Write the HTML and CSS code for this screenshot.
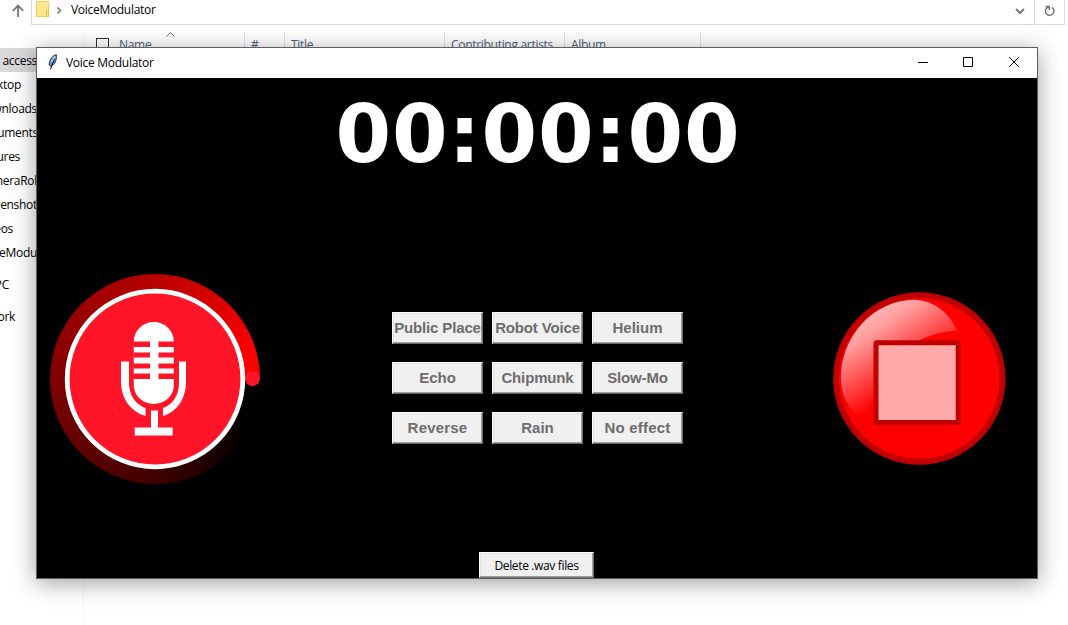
FILE: index.html
```html
<!DOCTYPE html>
<html lang="en">
<head>
<meta charset="utf-8">
<title>Voice Modulator</title>
<link rel="stylesheet" href="styles.css">
</head>
<body>
<div class="explorer">
  <header class="toolbar">
    <svg class="up" width="31" height="24" viewBox="0 0 31 24" fill="none" stroke="#757575" stroke-width="1.8"><path d="M18 17V5.500M12.800 10.800L18 5.600L23.200 10.800"/></svg>
    <div class="address">
      <svg width="34" height="24" viewBox="0 0 34 24"><path d="M4.500 1.500H16.500V16.500H4.500Z" fill="#ffe68f" stroke="#f0ce58"/><path d="M14.500 10.500H16.500V16.500H14.500Z" fill="#ffe68f" stroke="#e8bd3a"/><path d="M25.500 7.500L28.500 10.500L25.500 13.500" fill="none" stroke="#777" stroke-width="1.500"/></svg>
      <span class="path">VoiceModulator</span>
      <svg class="drop" width="24" height="24" viewBox="0 0 24 24"><path d="M6 9L10 13L14 9" fill="none" stroke="#777" stroke-width="2"/></svg>
    </div>
    <svg class="refresh" width="30" height="24" viewBox="0 0 30 24"><path d="M17.500 7.300A4.400 4.400 0 1 1 12.300 7.700L14.500 6.500M11 6.300H14.800V10" fill="none" stroke="#757575" stroke-width="1.500"/></svg>
  </header>
  <div class="panes">
    <nav class="sidebar">
      <div class="entry active">t access</div>
      <div class="entry desktop">ktop</div>
      <div class="entry">wnloads</div>
      <div class="entry documents">uments</div>
      <div class="entry pictures">ures</div>
      <div class="entry">neraRol</div>
      <div class="entry">enshot</div>
      <div class="entry videos">eos</div>
      <div class="entry">eModu</div>
      <div class="entry root pc">PC</div>
      <div class="entry root network">ork</div>
    </nav>
    <div class="columns">
      <div class="column name"><span class="check"></span><span>Name</span><svg class="sort" width="9" height="5" viewBox="0 0 9 5"><path d="M.5 4.500L4.500 .700L8.500 4.500" fill="none" stroke="#666"/></svg></div>
      <div class="column number">#</div>
      <div class="column title">Title</div>
      <div class="column artists">Contributing artists</div>
      <div class="column album">Album</div>
    </div>
  </div>
</div>

<main class="window">
  <header class="titlebar">
    <svg class="feather" width="12" height="16" viewBox="0 0 12 16"><path d="M9.300 .700C5.500 1.500 2 6 2.200 11L4 12.500C7.500 11 10 6 9.300 .700Z" fill="#5b93d7" stroke="#182234" stroke-width=".9"/><path d="M8 2.500L4.500 8" stroke="#b9d8f6" stroke-width="1.500"/><path d="M7.300 5L3.500 15.500" fill="none" stroke="#111" stroke-width="1"/></svg>
    <h1 class="caption">Voice Modulator</h1>
    <svg class="controls" width="138" height="30" viewBox="0 0 138 30" fill="none" stroke="#000"><path d="M19 14.500H29"/><path d="M64.500 9.500H73.500V18.500H64.500Z"/><path d="M110.200 9.200L119.800 18.800M119.800 9.200L110.200 18.800"/></svg>
  </header>
  <div class="client">
    <div class="timer">00:00:00</div>
    <div class="stage">
      <div class="record">
        <svg width="210" height="210" viewBox="0 0 210 210">
          <circle cx="202.500" cy="104.500" r="7.500" fill="#ff1428"/>
          <circle cx="105" cy="105" r="87.800" fill="#ff1428" stroke="#fff" stroke-width="4.800"/>
          <path fill="#fff" d="M83.800 67.500V67.500A20 19.500 0 0 1 123.800 67.500V105.500H83.800Z"/>
          <path fill="#fff" d="M83.800 105V111.500A20 18.500 0 0 0 123.800 111.500V105Z"/>
          <path fill="#ff1428" d="M83.500 67.500H100V73H83.500ZM108.500 67.500H124V73H108.500ZM83.500 78.500H100V83.500H83.500ZM108.500 78.500H124V83.500H108.500ZM83.500 89.500H100V94.500H83.500ZM108.500 89.500H124V94.500H108.500ZM83.500 99.500H100V105H83.500ZM108.500 99.500H124V105H108.500Z"/>
          <path fill="#fff" d="M71 87.500H79V109C79 121 85.500 130.500 95.500 134V142C80 137.500 71.500 124 71 109ZM129 87.500H136V109C135.500 124 128 137.500 113 142V134C123 130.500 129 121 129 109ZM101 136.500H108V153.500H122.700V161.500H84.700V153.500H101Z"/>
        </svg>
      </div>
      <div class="effects">
        <button class="button tight" disabled>Public Place</button>
        <button class="button tight" disabled>Robot Voice</button>
        <button class="button" disabled>Helium</button>
        <button class="button" disabled>Echo</button>
        <button class="button tight" disabled>Chipmunk</button>
        <button class="button tight" disabled>Slow-Mo</button>
        <button class="button loose" disabled>Reverse</button>
        <button class="button" disabled>Rain</button>
        <button class="button loose" disabled>No effect</button>
      </div>
      <svg class="stop" width="173" height="173" viewBox="0 0 173 173">
        <defs><linearGradient id="shine" gradientUnits="userSpaceOnUse" x1="30" y1="22" x2="76" y2="92"><stop offset="0" stop-color="#ffb9b9"/><stop offset=".25" stop-color="#ff9c9c"/><stop offset="1" stop-color="#f00"/></linearGradient></defs>
        <circle cx="86.300" cy="86.500" r="83.200" fill="#f00" stroke="#c00000" stroke-width="6"/>
        <path d="M80 7.700C102 8 117 22 124 38.500C75 42 40 75 35.500 135C18 121 8 106 8 86C8 44 40 9 80 7.700Z" fill="url(#shine)"/>
        <rect x="43" y="50.700" width="82.200" height="79.800" rx="1" fill="#ffaaaa" stroke="#c00000" stroke-width="5"/>
      </svg>
    </div>
    <button class="button delete">Delete .wav files</button>
  </div>
</main>
</body>
</html>
```
FILE: styles.css
```css
* { box-sizing: border-box; }
body {
  margin: 0;
  width: 1068px;
  height: 625px;
  overflow: hidden;
  background: #fff;
  color: #000;
  font: 12px/16px "Open Sans", "Noto Sans", sans-serif;
  letter-spacing: -0.3px;
}
svg { display: block; flex: none; }

.explorer { height: 625px; }
.toolbar { display: flex; width: 1065px; height: 25px; }
.address {
  display: flex;
  width: 1004px;
  border: solid #d9d9d9;
  border-width: 0 1px 1px;
}
.path { padding-top: 2px; margin-left: 5px; letter-spacing: -0.3px; }
.drop { margin-left: auto; }
.refresh { width: 30px; height: 25px; border: solid #d9d9d9; border-width: 0 1px 1px 0; }

.panes { display: flex; padding-top: 7px; height: 600px; }
.sidebar {
  width: 84px;
  padding-top: 16px;
  border-right: 1px solid #f3f3f3;
}
.entry {
  display: flex;
  justify-content: flex-end;
  width: 37px;
  height: 24px;
  padding-top: 1px;
  line-height: 24px;
  white-space: nowrap;
}
.entry.active { background: #d9d9d9; }
.entry.desktop { width: 21px; }
.entry.documents { width: 38px; }
.entry.pictures { width: 20px; }
.entry.videos { width: 13px; }
.entry.root { margin-top: 8px; }
.entry.pc { width: 9px; }
.entry.network { width: 15px; }

.columns { display: flex; height: 25px; color: #4c607a; }
.column { position: relative; padding: 5px 0 0 6px; border-right: 1px solid #e2e2e2; white-space: nowrap; }
.name { display: flex; gap: 10px; width: 161px; padding-left: 12px; }
.check { width: 13px; height: 13px; margin-top: 1px; border: 1px solid #333; }
.sort { position: absolute; left: 82px; top: 0; }
.number { width: 40px; }
.title { width: 160px; }
.artists { width: 120px; }
.album { width: 136px; }

.window {
  position: absolute;
  left: 36px;
  top: 47px;
  width: 1002px;
  height: 532px;
  border: 1px solid #605c5f;
  box-shadow: 0 4px 22px rgba(0, 0, 0, .38);
}
.titlebar { display: flex; height: 30px; background: #fff; }
.feather { margin: 6px 0 0 10px; }
.caption { margin: 7px 0 0 7px; font: inherit; letter-spacing: -0.28px; }
.controls { margin-left: auto; }

.client { display: flex; flex-direction: column; height: 500px; background: #000; }
.timer {
  height: 128px;
  padding: 10px 0 0 2px;
  color: #fff;
  font: bold 80px/93px "DejaVu Sans", sans-serif;
  letter-spacing: 0.9px;
  text-align: center;
}
.stage {
  display: flex;
  align-items: center;
  height: 346px;
  padding: 0 31px 0 13px;
}
.record {
  width: 210px;
  height: 210px;
  border-radius: 50%;
  background: conic-gradient(from 90deg, #000 0%, #000 7%, #400000 25%, #800000 50%, #b80000 75%, #ff0000 97%, #ff0000 100%);
}
.effects {
  display: grid;
  grid-template-columns: repeat(3, 91px);
  grid-auto-rows: 32px;
  gap: 18px 9px;
  margin: 0 0 2px 132px;
}
.stop { margin: 0 0 1px auto; }
.button {
  padding: 0;
  border: 1px solid;
  border-color: #fff #696969 #696969 #fff;
  box-shadow: inset -1px -1px #a0a0a0, inset 1px 1px #e3e3e3;
  background: #f0f0f0;
  color: #6d6d6d;
  font: bold 15px/20px "Liberation Sans", Arial, sans-serif;
  letter-spacing: 0;
  text-align: center;
  white-space: nowrap;
}
.tight { letter-spacing: -0.15px; }
.loose { letter-spacing: 0.2px; }
.delete {
  width: 115px;
  height: 26px;
  margin-left: 442px;
  padding-top: 1px;
  color: #000;
  font: 12px/16px "Open Sans", "Noto Sans", sans-serif;
  letter-spacing: -0.35px;
}
```
